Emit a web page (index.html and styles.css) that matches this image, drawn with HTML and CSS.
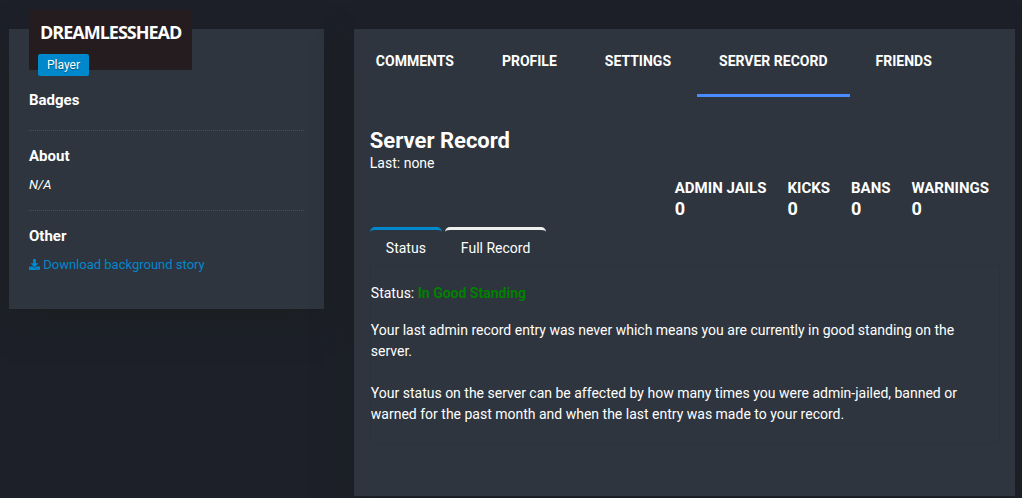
FILE: index.html
```html
<!DOCTYPE html>
<html lang="en">
<head>
<meta charset="UTF-8">
<meta name="viewport" content="width=device-width, initial-scale=1">
<title>Server Record</title>
<link rel="stylesheet" href="styles.css">
</head>
<body>
  <div class="layout">

    <aside class="card sidebar">
      <div class="profile">
        <h1 class="profile-name">DREAMLESSHEAD</h1>
        <span class="profile-role">Player</span>
      </div>

      <h2 class="side-title">Badges</h2>
      <hr class="dotted badges-end">

      <h2 class="side-title">About</h2>
      <p class="side-text"><em>N/A</em></p>
      <hr class="dotted">

      <h2 class="side-title">Other</h2>
      <p class="side-text">
        <a href="#story"><svg class="icon" viewBox="0 0 512 512" aria-hidden="true"><path fill="currentColor" d="M216 0h80c13.300 0 24 10.700 24 24v168h87.700c17.800 0 26.700 21.500 14.100 34.100L269.700 378.300c-7.500 7.500-19.800 7.500-27.300 0L90.100 226.100c-12.600-12.600-3.700-34.100 14.100-34.100H192V24c0-13.300 10.700-24 24-24zm296 376v112c0 13.300-10.700 24-24 24H24c-13.300 0-24-10.700-24-24V376c0-13.300 10.700-24 24-24h146.700l49 49c20.100 20.100 52.500 20.100 72.600 0l49-49H488c13.300 0 24 10.700 24 24zm-124 88c0-11-9-20-20-20s-20 9-20 20 9 20 20 20 20-9 20-20zm64 0c0-11-9-20-20-20s-20 9-20 20 9 20 20 20 20-9 20-20z"/></svg> Download background story</a>
      </p>
    </aside>

    <main class="card">
      <nav class="nav">
        <a href="#comments">Comments</a>
        <a href="#profile">Profile</a>
        <a href="#settings">Settings</a>
        <a href="#record" class="active">Server Record</a>
        <a href="#friends">Friends</a>
      </nav>

      <section class="record" id="record">
        <h2 class="record-title">Server Record</h2>
        <p class="record-last">Last: none</p>

        <dl class="stats">
          <div><dt>Admin Jails</dt><dd>0</dd></div>
          <div><dt>Kicks</dt><dd>0</dd></div>
          <div><dt>Bans</dt><dd>0</dd></div>
          <div><dt>Warnings</dt><dd>0</dd></div>
        </dl>

        <div class="tabs" role="tablist">
          <button type="button" class="tab active" role="tab" aria-selected="true">Status</button>
          <button type="button" class="tab" role="tab" aria-selected="false">Full Record</button>
        </div>

        <div class="tab-content" role="tabpanel">
          <p class="status">Status: <strong>In Good Standing</strong></p>
          <p>Your last admin record entry was never which means you are currently in good standing on the server.</p>
          <p>Your status on the server can be affected by how many times you were admin-jailed, banned or warned for the past month and when the last entry was made to your record.</p>
        </div>
      </section>
    </main>

  </div>
</body>
</html>
```

FILE: styles.css
```css
* { box-sizing: border-box; }
body {
margin: 0;
color: #fff;
background: #1d2029;
font-family: Roboto, Arial, sans-serif;
font-size: 14px;
line-height: 21px;
}
h1, h2, p, dl, dd { margin: 0; }
a { color: #0088cc; text-decoration: none; }
.layout {
display: grid;
grid-template-columns: 10fr 21fr;
column-gap: 30px;
align-items: start;
padding: 29px 7px 2px 9px;
}
.card {
background: #2e353e;
box-shadow: 0 10px 30px rgba(28, 31, 32, 0.9);
}

/* sidebar */
.sidebar { padding: 0 20px 33px; }
.profile {
position: relative;
width: fit-content;
height: 60px;
margin-top: -19px;
padding: 12px 11px 0 11px;
background: #241c1e;
}
.profile-name {
font-family: "Open Sans", Arial, sans-serif;
font-size: 18px;
line-height: 21px;
font-weight: 700;
letter-spacing: -1px;
}
.profile-role {
position: absolute;
left: 9px;
bottom: -6px;
padding: 0 9px;
border-radius: 2px;
background: #0088cc;
font-size: 12px;
line-height: 22px;
text-shadow: 0 1px 1px rgba(0, 0, 0, 0.4);
}
.side-title {
font-size: 15px;
line-height: 20px;
font-weight: 700;
}
.profile + .side-title { margin-top: 20px; }
.side-text {
margin-top: 8px;
font-size: 13px;
line-height: 22px;
}
.dotted {
margin: 14px 0 15px;
border: 0;
border-top: 1px dotted #4a4f58;
}
.badges-end { margin-top: 20px; }
.icon { width: 11px; height: 11px; vertical-align: -1px; }

/* top navigation */
.nav { display: flex; flex-wrap: wrap; gap: 4px; }
.nav a {
padding: 22px 22px;
border-bottom: 3px solid transparent;
color: #fff;
font-weight: 700;
text-transform: uppercase;
}
.nav a.active { border-color: #4a8cff; }

/* record */
.record { padding: 31px 15px 52px 16px; }
.record-title {
font-size: 22px;
line-height: 25px;
font-weight: 700;
}
.record-last { line-height: 20px; }
.stats {
display: flex;
justify-content: flex-end;
gap: 21px;
margin-top: 5px;
padding-right: 11px;
}
.stats dt {
font-size: 15px;
line-height: 21px;
font-weight: 700;
text-transform: uppercase;
}
.stats dd {
font-size: 18px;
line-height: 20px;
font-weight: 700;
}
.tabs { display: flex; gap: 3px; margin-top: 8px; }
.tab {
padding: 8px 16px 6px;
border: 0;
border-top: 3px solid #eee;
border-radius: 5px 5px 0 0;
background: none;
color: #fff;
font: inherit;
cursor: pointer;
}
.tab.active { border-color: #0088cc; }
.tab-content {
padding: 17px 15px 18px 0;
border: 1px solid #2c323b;
border-radius: 0 0 4px 4px;
}
.tab-content p + p { margin-top: 21px; }
.tab-content .status + p { margin-top: 16px; }
.status strong { color: green; }
```
